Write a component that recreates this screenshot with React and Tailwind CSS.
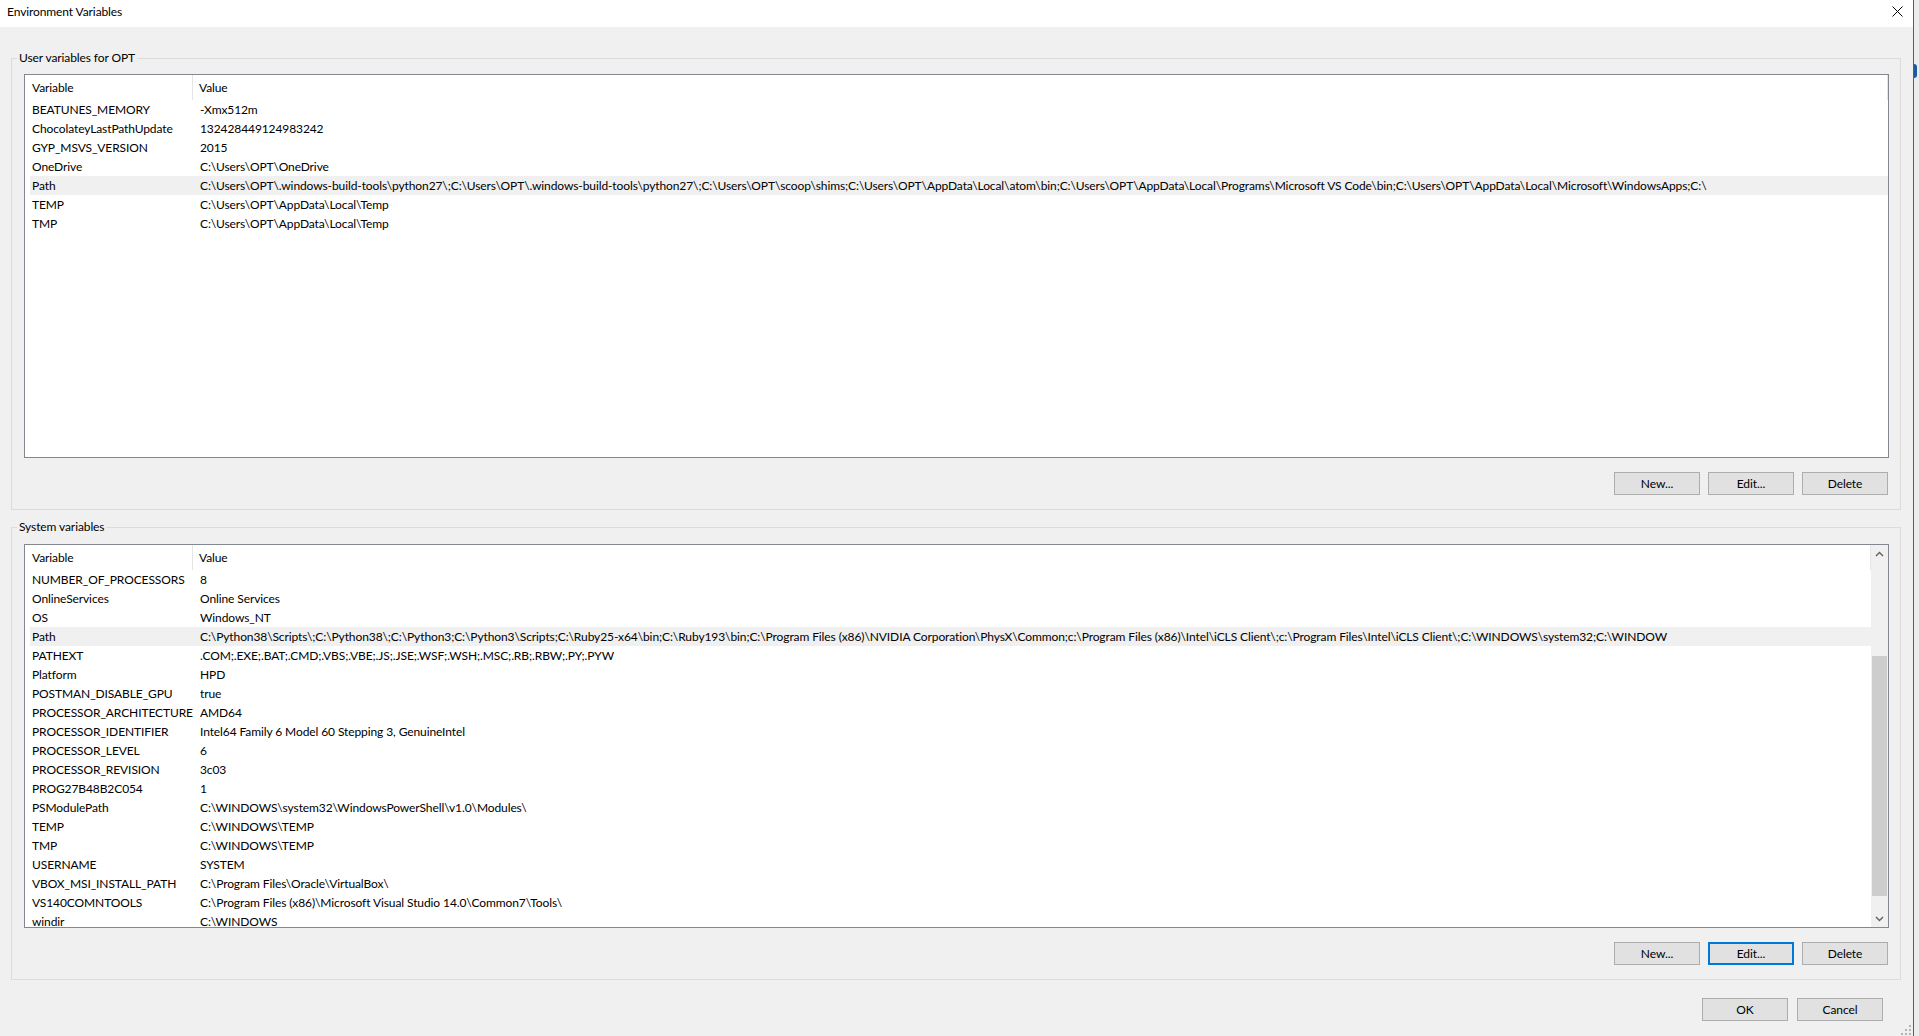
import clsx from "clsx";

// paths are written with "/" and shown with Windows backslashes
const w = (s) => s.replaceAll("/", "\\");

const userVars = [
  ["BEATUNES_MEMORY", "-Xmx512m"],
  ["ChocolateyLastPathUpdate", "132428449124983242"],
  ["GYP_MSVS_VERSION", "2015"],
  ["OneDrive", w("C:/Users/OPT/OneDrive")],
  ["Path", w("C:/Users/OPT/.windows-build-tools/python27/;C:/Users/OPT/.windows-build-tools/python27/;C:/Users/OPT/scoop/shims;C:/Users/OPT/AppData/Local/atom/bin;C:/Users/OPT/AppData/Local/Programs/Microsoft VS Code/bin;C:/Users/OPT/AppData/Local/Microsoft/WindowsApps;C:/")],
  ["TEMP", w("C:/Users/OPT/AppData/Local/Temp")],
  ["TMP", w("C:/Users/OPT/AppData/Local/Temp")],
];

const systemVars = [
  ["NUMBER_OF_PROCESSORS", "8"],
  ["OnlineServices", "Online Services"],
  ["OS", "Windows_NT"],
  ["Path", w("C:/Python38/Scripts/;C:/Python38/;C:/Python3;C:/Python3/Scripts;C:/Ruby25-x64/bin;C:/Ruby193/bin;C:/Program Files (x86)/NVIDIA Corporation/PhysX/Common;c:/Program Files (x86)/Intel/iCLS Client/;c:/Program Files/Intel/iCLS Client/;C:/WINDOWS/system32;C:/WINDOW")],
  ["PATHEXT", ".COM;.EXE;.BAT;.CMD;.VBS;.VBE;.JS;.JSE;.WSF;.WSH;.MSC;.RB;.RBW;.PY;.PYW"],
  ["Platform", "HPD"],
  ["POSTMAN_DISABLE_GPU", "true"],
  ["PROCESSOR_ARCHITECTURE", "AMD64"],
  ["PROCESSOR_IDENTIFIER", "Intel64 Family 6 Model 60 Stepping 3, GenuineIntel"],
  ["PROCESSOR_LEVEL", "6"],
  ["PROCESSOR_REVISION", "3c03"],
  ["PROG27B48B2C054", "1"],
  ["PSModulePath", w("C:/WINDOWS/system32/WindowsPowerShell/v1.0/Modules/")],
  ["TEMP", w("C:/WINDOWS/TEMP")],
  ["TMP", w("C:/WINDOWS/TEMP")],
  ["USERNAME", "SYSTEM"],
  ["VBOX_MSI_INSTALL_PATH", w("C:/Program Files/Oracle/VirtualBox/")],
  ["VS140COMNTOOLS", w("C:/Program Files (x86)/Microsoft Visual Studio 14.0/Common7/Tools/")],
  ["windir", w("C:/WINDOWS")],
];

function Button({ children, focused, className }) {
  return (
    <button
      className={clsx(
        "flex h-[23px] w-[86px] items-center justify-center bg-[#e1e1e1] text-[12px] text-black",
        focused ? "border-2 border-[#0078d7]" : "border border-[#adadad]",
        className
      )}
    >
      {children}
    </button>
  );
}

function VarList({ rows, scroll }) {
  return (
    <div className="flex h-[384px] w-[1865px] overflow-hidden border border-[#828790] bg-white">
      <div className="flex min-w-0 flex-1 flex-col overflow-hidden">
        <div className="flex h-[25px] shrink-0 items-center pl-[5px]">
          <div className="flex h-full w-[163px] items-center border-r border-[#e5e5e5] pl-[2px]">Variable</div>
          <div className="flex h-full flex-1 items-center border-r border-[#e5e5e5] pl-[6px]">Value</div>
        </div>
        {rows.map(([name, value]) => (
          <div
            key={name + value}
            className={clsx(
              "ml-[5px] flex h-[19px] shrink-0 items-center whitespace-nowrap",
              name === "Path" && "bg-[#f0f0f0]"
            )}
          >
            <div className="w-[168px] shrink-0 overflow-hidden pl-[2px]">{name}</div>
            <div className="min-w-0 flex-1 overflow-hidden pl-[2px]">{value}</div>
          </div>
        ))}
      </div>
      {scroll && (
        <div className="flex w-[17px] shrink-0 flex-col bg-[#f0f0f0]">
          <div className="flex h-[17px] items-center justify-center text-[#606060]">
            <svg width="9" height="6" viewBox="0 0 9 6" fill="none" stroke="currentColor" strokeWidth="1.4">
              <path d="M1 5 L4.5 1.5 L8 5" />
            </svg>
          </div>
          <div className="h-[94px]" />
          <div className="mx-[1px] h-[240px] bg-[#cdcdcd]" />
          <div className="flex-1" />
          <div className="flex h-[17px] items-center justify-center text-[#606060]">
            <svg width="9" height="6" viewBox="0 0 9 6" fill="none" stroke="currentColor" strokeWidth="1.4">
              <path d="M1 1 L4.5 4.5 L8 1" />
            </svg>
          </div>
        </div>
      )}
    </div>
  );
}

function Group({ label, rows, scroll, focusEdit, className, listGap }) {
  return (
    <fieldset className={clsx("w-[1890px] border border-[#dcdcdc] pb-[14px] pl-[5px]", className)}>
      <legend className="h-[16px] px-[2px] leading-[16px]">{label}</legend>
      <div className={clsx("ml-[7px]", listGap)}>
        <VarList rows={rows} scroll={scroll} />
        <div className="mt-[14px] flex w-[1864px] justify-end gap-[8px]">
          <Button>New...</Button>
          <Button focused={focusEdit}>Edit...</Button>
          <Button>Delete</Button>
        </div>
      </div>
    </fieldset>
  );
}

export default function App() {
  return (
    <div
      className="flex h-[1036px] w-[1919px] overflow-hidden bg-[#f0f0f0] text-[12px] tracking-[-0.1px] text-black"
      style={{ fontFamily: '"Segoe UI", Lato, "Liberation Sans", sans-serif' }}
    >
      <div className="flex w-[1913px] shrink-0 flex-col">
        <div className="flex h-[27px] shrink-0 items-center justify-between bg-white pl-[7px] pr-[10px]">
          <span className="-mt-[4px]">Environment Variables</span>
          <svg width="11" height="11" viewBox="0 0 11 11" stroke="#000" strokeWidth="1" className="-mt-[5px]">
            <path d="M0.5 0.5 L10.5 10.5 M10.5 0.5 L0.5 10.5" />
          </svg>
        </div>
        <div className="relative flex flex-1 flex-col pl-[11px]">
          <Group label="User variables for OPT" rows={userVars} className="mt-[23px]" listGap="mt-[8px]" />
          <Group
            label="System variables"
            rows={systemVars}
            scroll
            focusEdit
            className="mt-[9px]"
            listGap="mt-[9px]"
          />
          <div className="mt-[18px] flex w-[1872px] justify-end gap-[9px]">
            <Button>OK</Button>
            <Button>Cancel</Button>
          </div>
          <svg width="10" height="10" viewBox="0 0 10 10" className="absolute bottom-[1px] right-[2px]" fill="#b4b4b4">
            <rect x="8" y="0" width="2" height="2" />
            <rect x="4" y="4" width="2" height="2" />
            <rect x="8" y="4" width="2" height="2" />
            <rect x="0" y="8" width="2" height="2" />
            <rect x="4" y="8" width="2" height="2" />
            <rect x="8" y="8" width="2" height="2" />
          </svg>
        </div>
      </div>
      <div className="w-[1px] shrink-0 bg-[#5c5c5c]" />
      <div className="flex flex-1 flex-col bg-[#ececec] pt-[64px]">
        <div className="h-[14px] w-[3px] rounded-r-full bg-[#1b5aa0]" />
      </div>
    </div>
  );
}
